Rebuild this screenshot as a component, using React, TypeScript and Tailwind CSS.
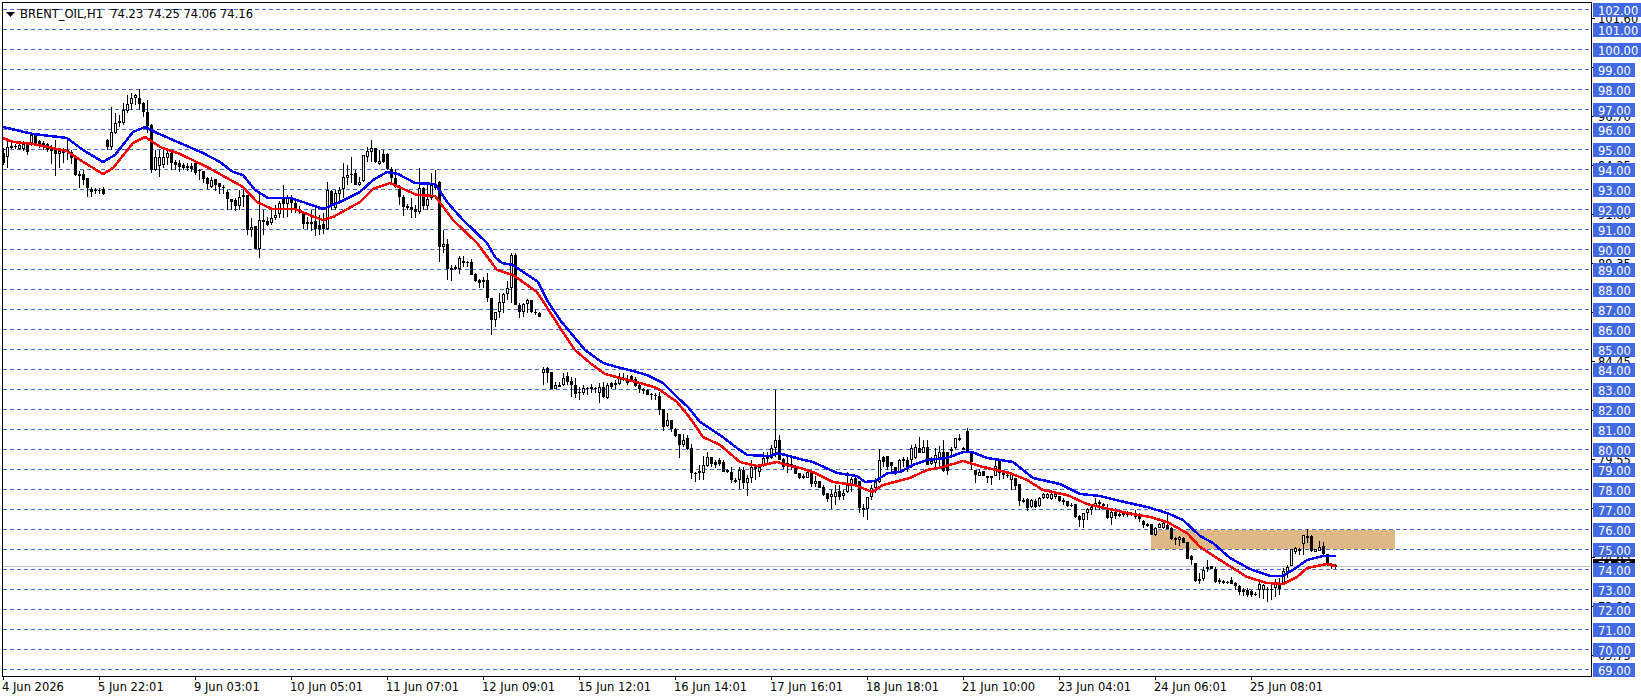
const FONT = 'font-["DejaVu_Sans",sans-serif]';

// x, high, low, open, close, all in page pixels (smaller y = higher price)
const bars: number[][] = [
  [3,148,165,153,163],[7,140,168,157,147],[11,143,149,147,146],[15,144,149,146,147],[19,143,150,149,145],[23,141,151,149,144],
  [27,142,155,145,152],[31,133,146,143,135],[35,134,146,135,143],[39,140,148,141,146],[43,141,150,143,147],[47,143,152,144,150],
  [51,145,164,147,151],[55,140,176,150,154],[59,149,168,154,151],[63,148,163,150,153],[67,140,160,150,152],[71,150,164,152,158],
  [75,155,176,156,175],[79,171,188,174,176],[83,170,185,174,180],[87,178,197,178,188],[91,187,197,189,192],[95,188,194,190,191],
  [99,188,194,190,191],[103,187,195,189,194],[107,139,150,140,147],[111,107,150,147,132],[115,113,134,133,123],[119,115,127,122,121],
  [123,103,125,123,110],[127,95,113,111,104],[131,93,110,104,98],[135,94,105,98,95],[139,89,110,98,104],[143,102,117,103,112],
  [147,100,133,112,126],[151,124,173,125,170],[155,150,171,170,157],[159,150,177,166,157],[163,148,168,165,157],[167,148,165,158,153],
  [171,150,170,153,163],[175,160,170,162,165],[179,160,172,163,167],[183,163,170,165,168],[187,163,171,166,168],[191,163,172,166,169],
  [195,162,175,163,173],[199,169,180,170,171],[203,171,183,171,179],[207,177,189,178,184],[211,177,188,187,180],[215,179,191,179,185],
  [219,183,194,183,187],[223,185,194,187,187],[227,190,210,192,199],[231,199,210,199,202],[235,198,211,200,206],[239,190,210,206,197],
  [243,190,207,195,197],[247,195,235,195,230],[251,218,237,230,227],[255,226,249,226,249],[259,193,258,249,220],[263,210,235,220,222],
  [267,217,226,221,225],[271,210,225,223,218],[275,205,220,218,215],[279,201,218,214,203],[283,185,218,199,204],[287,195,217,204,198],
  [291,195,213,198,203],[295,198,213,203,209],[299,206,214,209,210],[303,213,229,213,224],[307,217,229,222,224],[311,210,231,222,224],
  [315,205,236,221,229],[319,215,235,225,229],[323,213,234,224,229],[327,182,230,229,190],[331,190,210,191,205],[335,190,210,208,193],
  [339,187,203,194,190],[343,163,198,189,177],[347,165,185,178,175],[351,157,183,174,175],[355,170,185,173,185],[359,177,186,185,182],
  [363,155,182,181,155],[367,147,162,157,151],[371,140,162,152,148],[375,148,163,148,162],[379,150,165,164,161],[383,150,163,154,162],
  [387,153,170,154,169],[391,167,182,169,178],[395,169,188,178,187],[399,185,205,189,197],[403,195,216,197,207],[407,204,210,206,208],
  [411,198,218,207,210],[415,205,218,209,212],[419,168,214,212,188],[423,187,210,188,206],[427,185,210,206,199],[431,173,200,198,185],
  [435,170,190,185,188],[439,181,262,182,247],[443,230,253,247,244],[447,239,280,244,269],[451,265,281,270,268],[455,265,270,268,267],
  [459,256,274,269,258],[463,256,267,262,261],[467,261,267,262,263],[471,259,275,262,275],[475,273,282,274,281],[479,279,288,280,283],
  [483,277,288,282,280],[487,273,302,280,298],[491,298,335,298,320],[495,312,327,320,312],[499,293,318,312,302],[503,293,313,303,294],
  [507,281,300,294,288],[511,253,303,288,255],[515,253,305,255,305],[519,303,318,305,312],[523,303,317,312,304],[527,299,313,304,300],
  [531,300,313,300,312],[535,309,315,312,313],[539,312,317,313,317],[543,367,385,373,369],[547,367,383,368,373],[551,372,389,372,389],
  [555,382,389,389,385],[559,382,387,386,385],[563,373,386,385,378],[567,372,385,376,382],[571,377,397,381,385],[575,378,398,385,394],
  [579,387,400,392,393],[583,385,395,393,388],[587,387,395,388,388],[591,384,393,387,389],[595,387,393,388,389],[599,383,403,393,387],
  [603,382,398,387,397],[607,383,399,398,385],[611,382,389,383,387],[615,380,389,385,383],[619,373,385,384,378],[623,373,381,378,380],
  [627,375,385,379,383],[631,375,382,376,380],[635,377,387,379,386],[639,383,393,385,389],[643,388,394,389,391],[647,389,395,390,395],
  [651,393,400,394,395],[655,393,400,395,396],[659,392,415,396,410],[663,409,431,409,427],[667,413,427,426,420],[671,420,432,420,429],
  [675,428,437,429,436],[679,434,458,434,445],[683,434,447,445,440],[687,435,450,438,449],[691,444,479,448,473],[695,472,482,473,474],
  [699,465,480,473,471],[703,456,480,473,465],[707,452,467,466,457],[711,457,467,457,464],[715,460,468,462,465],[719,458,466,460,464],
  [723,460,472,462,472],[727,469,473,470,472],[731,467,483,472,480],[735,478,483,480,482],[739,467,489,480,470],[743,467,489,470,483],
  [747,475,496,483,478],[751,460,483,478,467],[755,465,480,467,469],[759,465,477,472,467],[763,452,467,466,458],[767,452,463,458,457],
  [771,445,459,458,448],[775,390,457,448,440],[779,435,460,440,460],[783,458,469,459,467],[787,457,473,463,465],[791,455,470,465,464],
  [795,465,474,467,474],[799,473,479,473,478],[803,474,479,477,476],[807,470,478,478,472],[811,470,487,472,484],[815,476,487,484,481],
  [819,481,488,481,488],[823,485,496,487,495],[827,493,502,493,499],[831,490,509,497,494],[835,485,505,497,492],[839,485,500,491,497],
  [843,490,500,496,493],[847,472,493,492,485],[851,477,492,485,479],[855,475,485,478,484],[859,481,513,481,508],[863,504,517,509,508],
  [867,497,520,509,497],[871,485,500,497,488],[875,478,493,488,482],[879,449,483,482,460],[883,456,467,457,462],[887,456,470,456,467],
  [891,462,471,462,466],[895,467,475,467,472],[899,459,473,472,460],[903,457,467,460,459],[907,457,472,460,468],[911,445,468,460,448],
  [915,444,459,458,447],[919,437,453,448,453],[923,440,453,453,447],[927,440,465,447,465],[931,457,465,464,461],[935,448,470,463,455],
  [939,446,468,460,452],[943,440,472,452,471],[947,452,475,452,471],[951,447,458,451,449],[955,438,449,448,438],[959,434,441,439,438],
  [963,447,450,449,448],[967,428,451,431,451],[971,451,470,451,462],[975,470,483,470,475],[979,469,476,476,472],[983,471,476,471,476],
  [987,476,483,477,476],[991,476,485,477,476],[995,458,476,476,466],[999,459,480,460,473],[1003,473,479,474,473],[1007,473,478,475,476],
  [1011,472,490,480,474],[1015,478,490,478,486],[1019,484,506,484,501],[1023,498,503,500,502],[1027,498,511,499,508],[1031,499,508,507,500],
  [1035,499,508,501,507],[1039,497,507,506,498],[1043,493,499,498,494],[1047,493,499,498,494],[1051,493,500,499,494],[1055,493,499,497,494],
  [1059,496,502,496,501],[1063,498,505,501,500],[1067,501,507,501,506],[1071,503,507,505,506],[1075,504,518,504,517],[1079,515,527,516,520],
  [1083,513,528,520,513],[1087,508,520,513,509],[1091,505,515,510,507],[1095,498,510,507,503],[1099,500,510,502,504],[1103,503,508,505,504],
  [1107,504,519,509,518],[1111,509,525,518,512],[1115,508,519,512,516],[1119,513,517,516,514],[1123,513,517,515,513],[1127,511,517,515,513],
  [1131,512,516,514,513],[1135,510,519,513,517],[1139,513,522,515,519],[1143,520,528,521,525],[1147,523,527,525,524],[1151,524,535,524,535],
  [1155,527,536,535,528],[1159,523,528,528,524],[1163,521,529,528,523],[1167,513,529,525,529],[1171,527,540,528,539],[1175,537,545,539,538],
  [1179,536,546,540,537],[1183,537,543,538,543],[1187,542,559,542,559],[1191,555,565,556,560],[1195,563,582,563,581],[1199,573,584,580,579],
  [1203,567,581,579,570],[1207,560,572,569,567],[1211,566,569,566,569],[1215,567,583,569,582],[1219,578,584,580,582],[1223,580,584,581,583],
  [1227,581,584,582,583],[1231,577,584,580,584],[1235,582,590,583,586],[1239,585,595,586,592],[1243,588,596,590,592],[1247,588,597,590,595],
  [1251,590,597,591,595],[1255,592,596,594,595],[1259,582,598,590,584],[1263,584,599,590,585],[1267,587,602,589,590],[1271,585,600,589,590],
  [1275,579,597,588,584],[1279,578,595,583,589],[1283,568,585,584,571],[1287,565,578,572,567],[1291,549,566,566,549],[1295,547,554,552,548],
  [1299,548,555,551,549],[1303,535,555,544,535],[1307,529,543,536,538],[1311,535,552,536,551],[1315,549,552,552,549],[1319,541,551,551,547],
  [1323,542,555,546,554],[1327,554,566,554,565],[1331,563,569,565,564],[1335,564,569,566,565],
];

const blue =
  "3,127 20,131 33,134 67,138 83,150 103,162 115,155 133,132 145,127 157,133 180,143 203,153 220,162 233,172 243,175 255,190 268,198 290,198 303,202 323,209 340,202 360,192 373,180 387,172 398,174 415,183 435,184 448,203 463,220 487,243 495,257 502,263 513,265 538,282 547,300 560,320 585,350 603,363 617,367 633,371 647,375 663,383 678,398 688,407 700,422 720,435 737,448 747,455 770,456 778,453 800,459 813,462 837,473 857,476 865,482 875,481 888,473 900,472 913,465 927,460 947,458 963,452 972,452 987,458 1013,462 1033,478 1060,484 1080,494 1100,496 1120,501 1147,507 1167,513 1183,520 1200,536 1213,543 1230,558 1250,569 1270,576 1282,576 1293,570 1307,560 1323,556 1336,556";
const red =
  "3,138 13,142 33,144 67,151 80,160 103,174 113,168 133,143 145,137 160,147 180,154 207,167 227,178 243,187 257,202 272,209 295,209 317,218 323,220 333,217 360,202 373,189 390,183 417,195 435,196 453,220 477,243 497,270 513,275 537,292 557,323 575,350 590,363 605,374 620,378 640,383 657,388 677,402 690,418 703,437 720,445 740,462 757,466 763,465 777,462 787,465 800,468 813,472 833,482 855,485 872,492 883,485 910,478 927,470 943,467 963,461 983,467 1010,473 1027,480 1043,490 1067,495 1087,504 1100,507 1127,513 1150,517 1167,522 1187,533 1200,547 1220,560 1247,577 1267,583 1283,584 1297,577 1307,568 1327,564 1336,566";

const levels = Array.from({ length: 34 }, (_, i) => 102 - i);
const scale = [
  ["101.60", 18], ["99.15", 67], ["96.70", 116], ["94.25", 165], ["91.80", 214], ["89.35", 263], ["86.90", 312],
  ["84.45", 361], ["82.00", 410], ["79.55", 459], ["77.10", 508], ["74.65", 557], ["72.20", 606], ["69.75", 655],
] as const;
const times = [
  "4 Jun 2026", "5 Jun 22:01", "9 Jun 03:01", "10 Jun 05:01", "11 Jun 07:01", "12 Jun 09:01", "15 Jun 12:01",
  "16 Jun 14:01", "17 Jun 16:01", "18 Jun 18:01", "21 Jun 10:00", "23 Jun 04:01", "24 Jun 06:01", "25 Jun 08:01",
];

function Chart() {
  return (
    <svg viewBox="3 3 1588 671" className="block h-[671px] w-[1588px]" shapeRendering="crispEdges">
      <rect x={1151} y={530} width={244} height={19} fill="#deb887" />
      <line x1={3} x2={1591} y1={566.5} y2={566.5} stroke="#c0c0c0" />
      {levels.map((p) => {
        const y = 9.5 + (102 - p) * 20;
        return <line key={p} x1={3} x2={1590} y1={y} y2={y} stroke="#4169e1" strokeDasharray="4 3" />;
      })}
      {bars.map(([x, hi, lo, o, c]) => {
        const top = Math.min(o, c);
        const h = Math.max(Math.abs(o - c), 1);
        return (
          <g key={x}>
            <rect x={x} y={hi} width={1} height={lo - hi} fill="#000" />
            {c < o ? (
              <rect x={x - 0.5} y={top + 0.5} width={2} height={h - 1 > 0 ? h - 1 : 1} fill="#fff" stroke="#000" />
            ) : (
              <rect x={x - 1} y={top} width={3} height={h} fill="#000" />
            )}
          </g>
        );
      })}
      <polyline points={blue} fill="none" stroke="#0000ff" strokeWidth={2.5} strokeLinejoin="round" />
      <polyline points={red} fill="none" stroke="#ff0000" strokeWidth={2.5} strokeLinejoin="round" />
    </svg>
  );
}

export default function App() {
  return (
    <div className={`h-[698px] w-[1641px] overflow-hidden bg-white text-[11.5px] leading-[14px] text-black ${FONT}`}>
      <div className="flex pt-[2px]">
        <div className="relative ml-[2px] border border-black">
          <Chart />
          <div className="absolute left-[3px] top-[4px] flex items-center gap-[5px] whitespace-pre">
            <svg width="9" height="5" viewBox="0 0 9 5" className="mt-[1px]"><path d="M0 0h9L4.5 5z" fill="#000" /></svg>
            <span>BRENT_OIL,H1  74.23 74.25 74.06 74.16</span>
          </div>
        </div>
        <div className="relative flex-1 pl-px pt-px">
          {scale.map(([label, y]) => (
            <div key={label}>
              <div className="absolute left-0 h-px w-[3px] bg-black" style={{ top: y - 2 }} />
              <div className="absolute left-[6px]" style={{ top: y - 8 }}>{label}</div>
            </div>
          ))}
          <div className="absolute left-px top-[557px] h-[14px] w-[42px] bg-black pl-[5px] text-white">74.16</div>
          <div className="relative flex flex-col items-start gap-[6px]">
            {levels.map((p) => (
              <div key={p} className={`h-[14px] overflow-hidden bg-[#4169e1] pl-[5px] leading-[16px] text-white ${p >= 100 ? "w-[48px]" : "w-[42px]"}`}>
                {p}.00
              </div>
            ))}
          </div>
        </div>
      </div>
      <div className="ml-[2px] flex">
        {times.map((t) => (
          <div key={t} className="w-[96px] whitespace-nowrap">
            <div className="ml-px h-[3px] w-px bg-black" />
            <div>{t}</div>
          </div>
        ))}
      </div>
    </div>
  );
}
